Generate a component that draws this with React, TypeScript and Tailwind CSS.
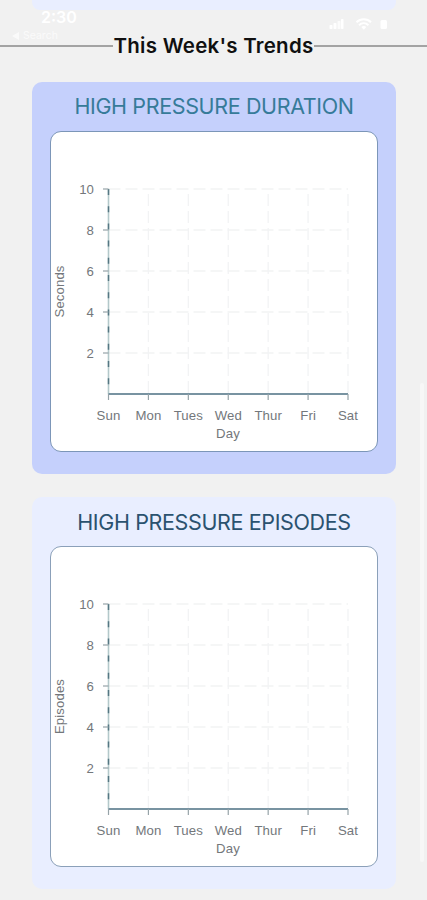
const days = ['Sun', 'Mon', 'Tues', 'Wed', 'Thur', 'Fri', 'Sat'];
const ticks = [10, 8, 6, 4, 2];

const LEFT = 57.5;
const RIGHT = 297;
const TOP = 57;
const BOTTOM = 262;

const xFor = (index: number) => LEFT + (index * (RIGHT - LEFT)) / (days.length - 1);
const yFor = (value: number) => BOTTOM - (value * (BOTTOM - TOP)) / 10;

function StatusBar() {
  return (
    <div className="absolute inset-x-0 top-0 h-11 text-white">
      <p className="absolute left-[41px] top-[7px] text-[16px] leading-5 font-semibold">2:30</p>
      <div className="absolute left-[12px] top-[30px] flex items-center gap-1 opacity-70">
        <svg width="7" height="8" viewBox="0 0 7 8" fill="currentColor">
          <path d="M7 0v8L0 4z" />
        </svg>
        <span className="text-[10.5px] leading-3">Search</span>
      </div>
      <svg className="absolute left-[329px] top-[17px]" width="62" height="14" viewBox="0 0 62 14" fill="currentColor">
        <rect x="0.5" y="8" width="3" height="4" rx="0.8" />
        <rect x="4.5" y="6" width="3" height="6" rx="0.8" />
        <rect x="8.5" y="4" width="3" height="8" rx="0.8" opacity="0.8" />
        <rect x="12" y="2" width="2.5" height="10" rx="0.8" />
        <g fill="none" stroke="currentColor" strokeWidth="2">
          <path d="M27.5 5.2c4-4 10.5-4 14.5 0" />
          <path d="M30 8.2c2.7-2.5 6.7-2.5 9.5 0" />
        </g>
        <path d="M34.8 12.7l-2.5-2.7c1.5-1.2 3.5-1.2 5 0z" />
        <rect x="51.5" y="3" width="6.5" height="9" rx="1.5" />
      </svg>
    </div>
  );
}

function TrendChart({ unit }: { unit: string }) {
  return (
    <svg className="block" width="326" height="319" viewBox="0 0 326 319">
      {/* Grid */}
      <g strokeDasharray="12 5" strokeWidth="1.3" stroke="#f2f3f4">
        {ticks.map((tick) => (
          <line key={tick} x1={LEFT} x2={RIGHT} y1={yFor(tick)} y2={yFor(tick)} />
        ))}
        {days.slice(1).map((day, index) => (
          <line key={day} x1={xFor(index + 1)} x2={xFor(index + 1)} y1={TOP + 5} y2={BOTTOM} />
        ))}
      </g>

      {/* Axes */}
      <line x1={LEFT} x2={LEFT} y1={TOP} y2={BOTTOM} stroke="#b3c8ca" strokeWidth="1.6" />
      <line
        x1={LEFT}
        x2={LEFT}
        y1={TOP}
        y2={BOTTOM - 8}
        stroke="#557783"
        strokeWidth="1.5"
        strokeDasharray="6 11.2"
      />
      <line x1={LEFT} y1={BOTTOM} x2={RIGHT} y2={BOTTOM} stroke="#7893a1" strokeWidth="2" />

      <g stroke="#96a3a8" strokeWidth="1.2">
        {ticks.map((tick) => (
          <line key={tick} x1={LEFT - 5.5} x2={LEFT} y1={yFor(tick)} y2={yFor(tick)} />
        ))}
        {days.map((day, index) => (
          <line key={day} x1={xFor(index)} x2={xFor(index)} y1={BOTTOM} y2={BOTTOM + 6} />
        ))}
      </g>

      <g fill="#73777b" className="font-['Liberation_Sans',sans-serif] text-[13.2px] tracking-[0.1px]">
        {ticks.map((tick) => (
          <text key={tick} x="43" y={yFor(tick) + 4.5} textAnchor="end">
            {tick}
          </text>
        ))}
        {days.map((day, index) => (
          <text key={day} x={xFor(index)} y="288" textAnchor="middle">
            {day}
          </text>
        ))}
        <text x="177" y="305.5" textAnchor="middle">
          Day
        </text>
        <text transform="translate(12.5 159.5) rotate(-90)" textAnchor="middle">
          {unit}
        </text>
      </g>
    </svg>
  );
}

export default function App() {
  return (
    <div className="relative h-[900px] w-[427px] overflow-hidden bg-[#f1f1f1] font-['Inter',sans-serif]">
      <div className="ml-8 h-[10px] w-[364px] rounded-b-lg bg-[#e9eeff]" />
      <StatusBar />

      <div className="mt-[22px] flex h-7 items-center">
        <div className="h-[1.5px] flex-1 bg-[#a3a3a3]" />
        <h1 className="w-[201px] whitespace-nowrap text-center text-[20.5px] leading-7 font-semibold tracking-[0.25px] text-[#101010]">
          This Week's Trends
        </h1>
        <div className="h-[1.5px] flex-1 bg-[#a3a3a3]" />
      </div>

      <div className="ml-8 mt-[22px] flex w-[364px] flex-col gap-[23px]">
        <section className="h-[392px] rounded-[10px] bg-[#c5d0fc] px-[18px] pt-2">
          <h2 className="h-[41px] whitespace-nowrap text-center text-[21.5px] leading-8 tracking-[-0.37px] text-[#367b99]">
            HIGH PRESSURE DURATION
          </h2>
          <div className="h-[321px] w-[328px] rounded-[11px] border border-[#7c96b8] bg-white">
            <TrendChart unit="Seconds" />
          </div>
        </section>

        <section className="h-[392px] rounded-[10px] bg-[#e9eeff] px-[18px] pt-[9px]">
          <h2 className="h-10 whitespace-nowrap text-center text-[21.5px] leading-8 tracking-[-0.37px] text-[#2b526f]">
            HIGH PRESSURE EPISODES
          </h2>
          <div className="h-[321px] w-[328px] rounded-[11px] border border-[#8ba0b9] bg-white">
            <TrendChart unit="Episodes" />
          </div>
        </section>
      </div>

      {/* Scroll indicator */}
      <div className="absolute left-[420px] top-[383px] h-[479px] w-[4px] rounded-full bg-[#f7f7f7]" />
    </div>
  );
}
